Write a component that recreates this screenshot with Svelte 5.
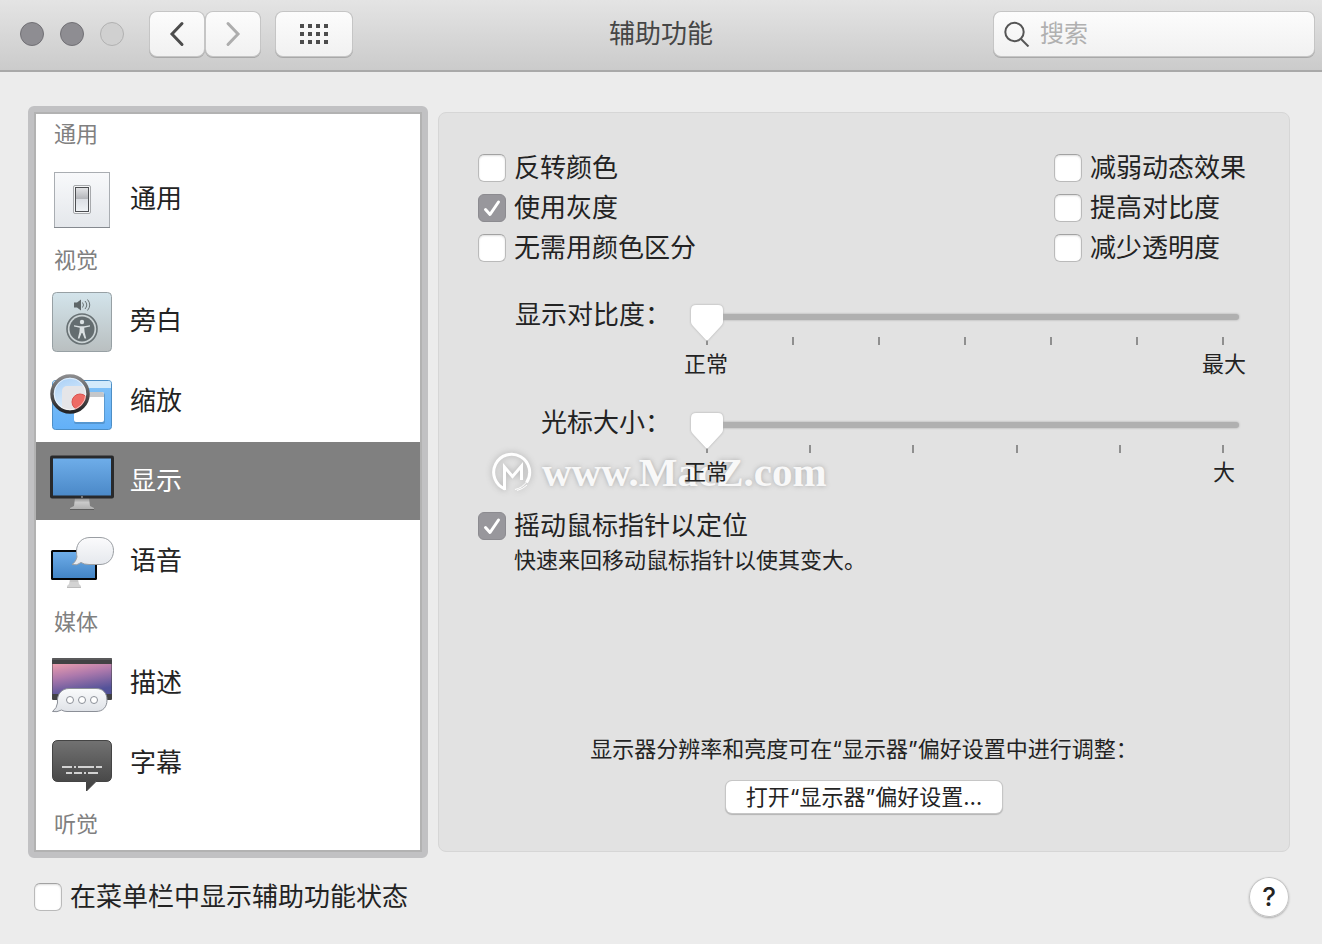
<script lang="ts">
    let selected = "display";
    let query = "";

    const groups = [
        { title: "通用", items: [{ id: "general", label: "通用" }] },
        {
            title: "视觉",
            items: [
                { id: "voiceover", label: "旁白" },
                { id: "zoom", label: "缩放" },
                { id: "display", label: "显示" },
                { id: "speech", label: "语音" },
            ],
        },
        {
            title: "媒体",
            items: [
                { id: "descriptions", label: "描述" },
                { id: "captions", label: "字幕" },
            ],
        },
        { title: "听觉", items: [] },
    ];

    const columns = [
        [
            { id: "invert", label: "反转颜色", checked: false },
            { id: "grayscale", label: "使用灰度", checked: true },
            { id: "differentiate", label: "无需用颜色区分", checked: false },
        ],
        [
            { id: "motion", label: "减弱动态效果", checked: false },
            { id: "contrast", label: "提高对比度", checked: false },
            { id: "transparency", label: "减少透明度", checked: false },
        ],
    ];

    const sliders = [
        { id: "display-contrast", label: "显示对比度：", ticks: 7, min: "正常", max: "最大", value: 0 },
        { id: "cursor-size", label: "光标大小：", ticks: 6, min: "正常", max: "大", value: 0 },
    ];

    const shake = { id: "shake", label: "摇动鼠标指针以定位", checked: true };
    const menuBar = { id: "menu-bar", label: "在菜单栏中显示辅助功能状态", checked: false };
</script>

{#snippet checkbox(option)}
    <label class="check" for={option.id}>
        <span class="box">
            <input type="checkbox" id={option.id} checked={option.checked} />
            <svg viewBox="0 0 28 28" aria-hidden="true">
                <path d="M7.5 15.5 12 20.5 20.5 8" />
            </svg>
        </span>
        {option.label}
    </label>
{/snippet}

<svelte:head>
    <title>辅助功能</title>
</svelte:head>

<div class="window" lang="zh-CN">
    <header>
        <div class="controls">
            <div class="lights">
                <button class="light" aria-label="关闭"></button>
                <button class="light" aria-label="最小化"></button>
                <button class="light off" aria-label="缩放窗口" disabled></button>
            </div>
            <div class="history">
                <button class="tool" aria-label="后退">
                    <svg width="16" height="26" viewBox="0 0 16 26"><path d="M13 2.5 3 13 13 23.5" /></svg>
                </button>
                <button class="tool forward" aria-label="前进" disabled>
                    <svg width="16" height="26" viewBox="0 0 16 26"><path d="M3 2.5 13 13 3 23.5" /></svg>
                </button>
            </div>
            <button class="tool all" aria-label="显示全部">
                <svg width="28" height="20" viewBox="0 0 28 20">
                    {#each [0, 8, 16] as y}
                        {#each [0, 8, 16, 24] as x}
                            <rect {x} {y} width="4" height="4" />
                        {/each}
                    {/each}
                </svg>
            </button>
        </div>
        <h1>辅助功能</h1>
        <label class="search">
            <svg width="26" height="26" viewBox="0 0 26 26" aria-hidden="true">
                <circle cx="10.5" cy="11" r="9.2" />
                <path d="M17 18 24.5 25.5" />
            </svg>
            <input type="text" placeholder="搜索" aria-label="搜索" bind:value={query} />
        </label>
    </header>

    <main>
        <nav>
            {#each groups as group}
                <h2>{group.title}</h2>
                {#each group.items as item}
                    <button class="item" class:selected={selected === item.id} on:click={() => (selected = item.id)}>
                        <svg width="64" height="64" viewBox="0 0 64 64" aria-hidden="true">
                            {#if item.id === "general"}
                                <defs>
                                    <linearGradient id="plate" x2="0" y2="1">
                                        <stop stop-color="#f8f9fb" /><stop offset="1" stop-color="#e4e7eb" />
                                    </linearGradient>
                                    <linearGradient id="rocker" x2="0" y2="1">
                                        <stop stop-color="#e2e3e5" /><stop offset=".12" stop-color="#d8d9dc" />
                                        <stop offset=".46" stop-color="#b4b6ba" /><stop offset=".48" stop-color="#dcdfe4" />
                                        <stop offset="1" stop-color="#f0f3f6" />
                                    </linearGradient>
                                </defs>
                                <rect x="4.5" y="5.5" width="55" height="55" fill="url(#plate)" stroke="#a9adb2" />
                                <path d="M4 60.5H60" stroke="#85898f" />
                                <rect x="23.5" y="18.5" width="17" height="28" rx="1.5" fill="#f5f6f7" stroke="#a7a9ac" />
                                <rect x="25.5" y="20.5" width="13" height="24" fill="url(#rocker)" stroke="#4d4f52" />
                            {:else if item.id === "voiceover"}
                                <defs>
                                    <linearGradient id="voice" x2="0" y2="1">
                                        <stop stop-color="#d3e4eb" /><stop offset="1" stop-color="#b9bfc0" />
                                    </linearGradient>
                                </defs>
                                <rect x="2.5" y="3.5" width="59" height="59" rx="4" fill="url(#voice)" stroke="#97a0a4" />
                                <path d="M24 13.5H27L31 10.5V21.5L27 18.5H24Z" fill="#5f6769" />
                                <path d="M32.5 13.5q2 2.5 0 5M35 12q3.5 4 0 8M37.5 10.5q4.5 5.5 0 11" fill="none" stroke="#6a7375" />
                                <circle cx="32" cy="40" r="15" fill="#cbd3d5" stroke="#687174" stroke-width="1.6" />
                                <circle cx="32" cy="40" r="12.5" fill="#646d70" />
                                <circle cx="32" cy="33" r="2.2" fill="#dbe1e3" />
                                <path d="M24 36.2 30 37.2H34L40 36.2V37.6L34.2 38.8 34.6 43 36.2 49.5H34.6L32.4 44H31.6L29.4 49.5H27.8L29.4 43 29.8 38.8 24 37.6Z" fill="#dbe1e3" />
                            {:else if item.id === "zoom"}
                                <defs>
                                    <linearGradient id="desk" x2="0" y2="1">
                                        <stop stop-color="#82c2f7" /><stop offset="1" stop-color="#62b0f8" />
                                    </linearGradient>
                                    <linearGradient id="lens" x2=".4" y2="1">
                                        <stop stop-color="#a6cef6" /><stop offset="1" stop-color="#e2f0fd" />
                                    </linearGradient>
                                    <linearGradient id="rim" x2="0" y2="1">
                                        <stop stop-color="#8b8b8d" /><stop offset=".5" stop-color="#555557" /><stop offset="1" stop-color="#242426" />
                                    </linearGradient>
                                    <clipPath id="glass"><circle cx="20" cy="25" r="17" /></clipPath>
                                </defs>
                                <rect x="2.5" y="11.5" width="59" height="49" rx="3" fill="url(#desk)" stroke="#4d8ec5" />
                                <path d="M3 19V14q0-2 2-2H59q2 0 2 2V19Z" fill="#d3eafb" />
                                <rect x="24" y="24" width="31" height="31" rx="2" fill="#477fae" opacity=".55" />
                                <rect x="24" y="23" width="30" height="30" rx="2" fill="#fff" />
                                <path d="M24 28V25q0-2 2-2H52q2 0 2 2V28Z" fill="#c5c7ca" />
                                <circle cx="20" cy="25" r="17" fill="url(#lens)" />
                                <g clip-path="url(#glass)">
                                    <rect x="12" y="17" width="40" height="40" rx="5" fill="#e5e5e8" />
                                    <circle cx="30" cy="33" r="8" fill="#ee6b65" stroke="#d9534f" />
                                </g>
                                <circle cx="20" cy="25" r="18" fill="none" stroke="url(#rim)" stroke-width="3.5" />
                                <circle cx="20" cy="25" r="15.8" fill="none" stroke="#fff" opacity=".6" />
                            {:else if item.id === "display"}
                                <defs>
                                    <linearGradient id="blue" x2="0" y2="1">
                                        <stop stop-color="#6eade9" /><stop offset="1" stop-color="#4b89c8" />
                                    </linearGradient>
                                    <linearGradient id="stand" x2="0" y2="1">
                                        <stop stop-color="#8d8d8d" /><stop offset=".4" stop-color="#c9c9c9" /><stop offset="1" stop-color="#b0b0b0" />
                                    </linearGradient>
                                </defs>
                                <path d="M25 49H39L40 57 44 59V60H20V59L24 57Z" fill="url(#stand)" />
                                <path d="M20 60.5H44" stroke="#5e5e5e" />
                                <rect y="6.5" width="64" height="43" rx="2" fill="#28292b" />
                                <rect x="3" y="9.5" width="58" height="37" fill="url(#blue)" />
                                <circle cx="32" cy="48" r=".9" fill="#999" />
                            {:else if item.id === "speech"}
                                <defs>
                                    <linearGradient id="screen" x2="0" y2="1">
                                        <stop stop-color="#6eade9" /><stop offset="1" stop-color="#4384c5" />
                                    </linearGradient>
                                    <linearGradient id="talk" x2="0" y2="1">
                                        <stop stop-color="#fbfbfc" /><stop offset="1" stop-color="#e5e8ed" />
                                    </linearGradient>
                                </defs>
                                <path d="M20 50H28L29 55 31 57V58H17V57L19 55Z" fill="#d3d3d3" />
                                <path d="M17 58.500H31M20 52H28" stroke="#bbb" />
                                <rect x="1" y="21" width="46" height="30" rx="1.5" fill="#050506" />
                                <rect x="3" y="23" width="42" height="26" fill="url(#screen)" />
                                <path d="M40 8.5H50C58 8.5 63.5 14 63.5 21.5C63.5 30 58 35.5 50 35.5H39Q34 35.5 31 33.5Q27 37 22 35.5Q26 33 27 28Q26.5 26 26.5 22C26.5 14 32 8.5 40 8.5Z" fill="url(#talk)" stroke="#9a9ea3" />
                            {:else if item.id === "descriptions"}
                                <defs>
                                    <linearGradient id="sunset" x2=".35" y2="1">
                                        <stop stop-color="#eb9eae" /><stop offset=".45" stop-color="#ad79ac" /><stop offset="1" stop-color="#535299" />
                                    </linearGradient>
                                    <linearGradient id="cloud" x2="0" y2="1">
                                        <stop stop-color="#fafbfc" /><stop offset="1" stop-color="#dfe2e7" />
                                    </linearGradient>
                                </defs>
                                <rect x="2" y="7" width="60" height="42" rx="1" fill="#424244" />
                                <path d="M2 8H62" stroke="#707072" />
                                <rect x="2.5" y="13" width="59" height="30" fill="url(#sunset)" />
                                <path d="M19 37.5H46C53 37.5 57 42 57 49C57 56 53 60.5 46 60.5H17Q14 60.5 11.5 59Q7 61.5 2.5 60.5Q7 57 7.5 52C6.5 43 12 37.5 19 37.5Z" fill="url(#cloud)" stroke="#8b8f97" />
                                {#each [20, 32, 44] as cx}
                                    <circle {cx} cy="49" r="3.5" fill="#fff" stroke="#8b8f97" />
                                {/each}
                            {:else if item.id === "captions"}
                                <defs>
                                    <linearGradient id="slate" x2="0" y2="1">
                                        <stop stop-color="#727272" /><stop offset="1" stop-color="#3f3f3f" />
                                    </linearGradient>
                                </defs>
                                <path d="M8 9.5H56Q61.5 9.5 61.5 15V45Q61.5 50.5 56 50.5H46L36.5 60V50.5H8Q2.5 50.5 2.5 45V15Q2.5 9.5 8 9.5Z" fill="url(#slate)" stroke="#444" />
                                <path d="M12 36H22M24 36h2M28 36H44M46 36h6M16 42h6M24 42h8M34 42h2M38 42H48" stroke="#d2d2d2" stroke-width="2" />
                            {/if}
                        </svg>
                        {item.label}
                    </button>
                {/each}
            {/each}
        </nav>

        <section class="panel">
            <div class="options">
                {#each columns as column}
                    <div>
                        {#each column as option}
                            {@render checkbox(option)}
                        {/each}
                    </div>
                {/each}
            </div>

            <div class="sliders">
                {#each sliders as slider}
                    <div class="slider">
                        <label for={slider.id}>{slider.label}</label>
                        <div class="range">
                            <input type="range" id={slider.id} min="0" max={slider.ticks - 1} bind:value={slider.value} />
                            <div class="ticks">
                                {#each Array(slider.ticks) as _}
                                    <i></i>
                                {/each}
                            </div>
                            <div class="ends">
                                <span>{slider.min}</span>
                                <span>{slider.max}</span>
                            </div>
                        </div>
                    </div>
                {/each}
            </div>

            {@render checkbox(shake)}
            <p class="hint">快速来回移动鼠标指针以使其变大。</p>

            <div class="more">
                <p>显示器分辨率和亮度可在“显示器”偏好设置中进行调整：</p>
                <button class="push">打开“显示器”偏好设置…</button>
            </div>

            <div class="watermark">
                <svg width="40" height="40" viewBox="0 0 40 40" aria-hidden="true">
                    <path d="M13 37A18 18 0 1 1 34.5 30.5" />
                    <path d="M12.5 38V15L20.5 24.5 29.5 14V28" />
                    <path class="brush" d="M23 37.5Q30 36 34.5 30M25 38.5Q31 37 35 33" />
                </svg>
                www.MacZ.com
            </div>
        </section>
    </main>

    <footer>
        {@render checkbox(menuBar)}
        <button class="help" aria-label="帮助">?</button>
    </footer>
</div>

<style>
    :global(body) {
        background: #ececec;
    }

    .window {
        color: #232323;
        font-family: Inter, "Noto Sans CJK SC", sans-serif;
        font-size: 26px;
        line-height: 40px;
    }

    button,
    input {
        margin: 0;
        padding: 0;
        border: none;
        color: inherit;
        font: inherit;
    }

    h1,
    h2,
    p {
        margin: 0;
        font-weight: normal;
    }

    svg {
        display: block;
        flex: none;
    }

    header {
        display: grid;
        grid-template-columns: 1fr auto 1fr;
        align-items: center;
        box-sizing: border-box;
        height: 72px;
        padding: 0 8px 2px;
        background: linear-gradient(#e4e4e4, #cbcbcb);
        border-bottom: 2px solid #a9a9a9;
    }

    .controls,
    .lights,
    .history {
        display: flex;
        align-items: center;
    }

    .lights {
        gap: 16px;
        margin: 0 26px 0 12px;
    }

    .light {
        width: 24px;
        height: 24px;
        background: #8e8d92;
        border: 1px solid #717075;
        border-radius: 50%;
    }

    .light.off {
        background: #d0d0d0;
        border-color: #b1b1b1;
    }

    .history {
        gap: 2px;
        margin-right: 16px;
    }

    .tool,
    .search {
        height: 44px;
        background: linear-gradient(#fcfcfc, #f1f1f1);
        border-radius: 7px;
        box-shadow: 0 0 0 1px #c5c5c5, 0 1px 0 1px #a8a8a8;
    }

    .tool {
        display: flex;
        align-items: center;
        justify-content: center;
        width: 54px;
    }

    .tool path {
        fill: none;
        stroke: #4c4c4c;
        stroke-width: 3;
        stroke-linecap: round;
    }

    .forward path {
        stroke: #adadad;
    }

    .all {
        width: 76px;
        fill: #4c4c4c;
    }

    h1 {
        color: #464646;
        font-size: 26px;
    }

    .search {
        display: flex;
        align-items: center;
        justify-self: end;
        gap: 10px;
        box-sizing: border-box;
        width: 320px;
        padding: 0 10px;
    }

    .search svg {
        fill: none;
        stroke: #555;
        stroke-width: 2;
    }

    .search input {
        flex: 1;
        min-width: 0;
        height: 40px;
        background: none;
        outline: none;
        font-size: 24px;
    }

    .search input::placeholder {
        color: #b0b0b0;
    }

    main {
        display: flex;
        gap: 10px;
        padding: 34px 32px 0 28px;
    }

    nav {
        flex: none;
        box-sizing: border-box;
        width: 400px;
        padding: 2px 2px 6px;
        background: #fff;
        border: 6px solid #c1c1c3;
        border-radius: 6px;
        box-shadow: inset 0 0 0 2px #b2b2b2;
    }

    h2 {
        padding: 0 18px 2px;
        color: #808080;
        font-size: 22px;
    }

    h2:first-child {
        padding-bottom: 6px;
    }

    .item {
        display: flex;
        align-items: center;
        gap: 16px;
        width: 100%;
        height: 78px;
        margin-bottom: 2px;
        padding: 0 14px;
        background: none;
        text-align: left;
    }

    .item.selected {
        background: #808080;
        color: #fff;
    }

    .panel {
        position: relative;
        isolation: isolate;
        display: flex;
        flex: 1;
        flex-direction: column;
        margin: 6px 0;
        padding: 35px 39px 38px;
        background: #e2e2e2;
        border: 1px solid #d6d6d6;
        border-radius: 8px;
    }

    .options {
        display: flex;
        justify-content: space-between;
        padding-right: 4px;
    }

    .check {
        display: flex;
        align-items: center;
        gap: 8px;
    }

    .box {
        display: grid;
        flex: none;
    }

    .box > * {
        grid-area: 1 / 1;
        width: 28px;
        height: 28px;
    }

    .box input {
        appearance: none;
        box-sizing: border-box;
        background: #fff;
        border: 1px solid #bababa;
        border-top-color: #a2a2a2;
        border-radius: 6px;
        box-shadow: inset 0 1px 2px #ddd;
    }

    .box input:checked {
        background: #98979c;
        border-color: #8c8b90;
        box-shadow: none;
    }

    .box svg {
        visibility: hidden;
        pointer-events: none;
        fill: none;
        stroke: #fff;
        stroke-width: 3;
        stroke-linecap: round;
        stroke-linejoin: round;
    }

    .box input:checked + svg {
        visibility: visible;
    }

    .sliders {
        display: flex;
        flex-direction: column;
        gap: 34px;
        margin: 37px 0 19px;
    }

    .slider {
        display: flex;
        gap: 20px;
        padding-right: 11px;
    }

    .slider label {
        width: 193px;
        line-height: 20px;
        text-align: right;
    }

    .range {
        flex: 1;
    }

    .range input {
        display: block;
        appearance: none;
        width: 100%;
        height: 24px;
        background: none;
        filter: drop-shadow(0 0 1px #aaa);
    }

    .range input::-webkit-slider-runnable-track {
        height: 6px;
        background: #b0b0b0;
        border-radius: 3px;
    }

    .range input::-webkit-slider-thumb {
        appearance: none;
        width: 32px;
        height: 36px;
        margin-top: -9px;
        background: #fff;
        clip-path: path("M5 0H27Q32 0 32 5V17Q32 19 30 21L17 35Q16 36 15 35L2 21Q0 19 0 17V5Q0 0 5 0Z");
    }

    .ticks,
    .ends {
        display: flex;
        justify-content: space-between;
    }

    .ticks {
        margin-top: 8px;
        padding: 0 15px;
    }

    .ticks i {
        width: 2px;
        height: 8px;
        background: #8f8f8f;
    }

    .ends {
        margin: 4px -7px 0;
        font-size: 22px;
        line-height: 30px;
    }

    .ends span {
        width: 44px;
        text-align: center;
    }

    .hint {
        padding-left: 36px;
        font-size: 22px;
        line-height: 28px;
    }

    .more {
        display: flex;
        flex-direction: column;
        align-items: center;
        gap: 12px;
        margin-top: auto;
        font-size: 22px;
    }

    .push {
        height: 32px;
        padding: 0 20px;
        background: #fff;
        border-radius: 6px;
        box-shadow: 0 0 0 1px #c6c6c6, 0 1px 1px 1px #b4b4b4;
        line-height: 32px;
    }

    .watermark {
        position: absolute;
        z-index: -1;
        top: 339px;
        left: 53px;
        display: flex;
        align-items: center;
        gap: 10px;
        color: #f8f8f8;
        font-family: "Liberation Serif", serif;
        font-size: 41px;
        font-weight: bold;
        text-shadow: 0 0 5px #aaa;
        pointer-events: none;
    }

    .watermark svg {
        fill: none;
        stroke: #fff;
        stroke-width: 3;
        filter: drop-shadow(0 0 3px #aaa);
    }

    .watermark .brush {
        stroke-width: 1;
    }

    footer {
        display: flex;
        align-items: center;
        justify-content: space-between;
        padding: 19px 33px 25px 34px;
    }

    .help {
        width: 40px;
        height: 40px;
        background: #fff;
        border-radius: 50%;
        box-shadow: inset 0 0 0 1px #c4c4c4, 0 1px 2px #aaa;
        font-weight: 500;
    }
</style>
